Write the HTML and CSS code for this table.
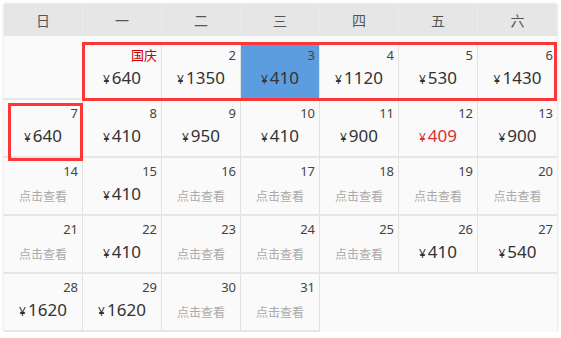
FILE: index.html
```html
<!DOCTYPE html>
<html lang="zh-CN">
<head>
    <meta charset="UTF-8">
    <meta name="viewport" content="width=device-width, initial-scale=1.0">
    <title>低价日历</title>
    <link rel="stylesheet" href="styles.css">
</head>
<body>
    <div class="calendar">
        <div class="calendar-week">
            <div class="week-day">日</div>
            <div class="week-day">一</div>
            <div class="week-day">二</div>
            <div class="week-day">三</div>
            <div class="week-day">四</div>
            <div class="week-day">五</div>
            <div class="week-day">六</div>
        </div>
        <div class="calendar-days">
            <div class="day day-empty"></div>
            <div class="day"><div class="day-num day-holiday">国庆</div><div class="price"><span class="yen">¥</span>640</div></div>
            <div class="day"><div class="day-num">2</div><div class="price"><span class="yen">¥</span>1350</div></div>
            <div class="day day-selected"><div class="day-num">3</div><div class="price"><span class="yen">¥</span>410</div></div>
            <div class="day"><div class="day-num">4</div><div class="price"><span class="yen">¥</span>1120</div></div>
            <div class="day"><div class="day-num">5</div><div class="price"><span class="yen">¥</span>530</div></div>
            <div class="day"><div class="day-num">6</div><div class="price"><span class="yen">¥</span>1430</div></div>

            <div class="day"><div class="day-num">7</div><div class="price"><span class="yen">¥</span>640</div></div>
            <div class="day"><div class="day-num">8</div><div class="price"><span class="yen">¥</span>410</div></div>
            <div class="day"><div class="day-num">9</div><div class="price"><span class="yen">¥</span>950</div></div>
            <div class="day"><div class="day-num">10</div><div class="price"><span class="yen">¥</span>410</div></div>
            <div class="day"><div class="day-num">11</div><div class="price"><span class="yen">¥</span>900</div></div>
            <div class="day"><div class="day-num">12</div><div class="price price-low"><span class="yen">¥</span>409</div></div>
            <div class="day"><div class="day-num">13</div><div class="price"><span class="yen">¥</span>900</div></div>

            <div class="day"><div class="day-num">14</div><div class="check">点击查看</div></div>
            <div class="day"><div class="day-num">15</div><div class="price"><span class="yen">¥</span>410</div></div>
            <div class="day"><div class="day-num">16</div><div class="check">点击查看</div></div>
            <div class="day"><div class="day-num">17</div><div class="check">点击查看</div></div>
            <div class="day"><div class="day-num">18</div><div class="check">点击查看</div></div>
            <div class="day"><div class="day-num">19</div><div class="check">点击查看</div></div>
            <div class="day"><div class="day-num">20</div><div class="check">点击查看</div></div>

            <div class="day"><div class="day-num">21</div><div class="check">点击查看</div></div>
            <div class="day"><div class="day-num">22</div><div class="price"><span class="yen">¥</span>410</div></div>
            <div class="day"><div class="day-num">23</div><div class="check">点击查看</div></div>
            <div class="day"><div class="day-num">24</div><div class="check">点击查看</div></div>
            <div class="day"><div class="day-num">25</div><div class="check">点击查看</div></div>
            <div class="day"><div class="day-num">26</div><div class="price"><span class="yen">¥</span>410</div></div>
            <div class="day"><div class="day-num">27</div><div class="price"><span class="yen">¥</span>540</div></div>

            <div class="day"><div class="day-num">28</div><div class="price"><span class="yen">¥</span>1620</div></div>
            <div class="day"><div class="day-num">29</div><div class="price"><span class="yen">¥</span>1620</div></div>
            <div class="day"><div class="day-num">30</div><div class="check">点击查看</div></div>
            <div class="day"><div class="day-num">31</div><div class="check">点击查看</div></div>
        </div>

        <!-- holiday ranges drawn over the grid -->
        <div class="holiday-mark holiday-mark-week1"></div>
        <div class="holiday-mark holiday-mark-week2"></div>
    </div>
</body>
</html>
```

FILE: styles.css
```css
body {
    margin: 0;
    background-color: #fff;
    font-family: "Noto Sans", "Noto Sans CJK SC", sans-serif;
}

.calendar {
    position: relative;
    width: 553px;
    margin: 4px 0 0 4px;
    background-color: #fafafa;
    box-shadow: 0 0 3px rgba(0, 0, 0, 0.18);
}

.calendar-week {
    display: grid;
    grid-template-columns: repeat(7, 79px);
    height: 32px;
    background-color: #e6e6e6;
    margin-bottom: 6px;
}

.week-day {
    display: flex;
    justify-content: center;
    align-items: center;
    font-size: 14px;
    color: #555;
    border-right: 1px solid #ebebeb;
}

.week-day:last-child {
    border-right: none;
}

.calendar-days {
    display: grid;
    grid-template-columns: repeat(7, 79px);
    grid-auto-rows: 58px;
}

.day {
    box-sizing: border-box;
    padding: 5px 4px 0 0;
    border-right: 1px solid #e3e3e3;
    border-bottom: 2px solid #e6e6e6;
    display: flex;
    flex-direction: column;
}

.day:nth-child(7n) {
    border-right: none;
}

.day-empty {
    border-right: none;
}

.day-selected {
    background-color: #5c9de0;
}

.day-num {
    height: 16px;
    line-height: 16px;
    font-size: 13px;
    color: #444;
    text-align: right;
}

.day-holiday {
    color: #c40000;
}

.price {
    margin-top: 4px;
    padding-left: 4px;
    line-height: 22px;
    font-size: 17px;
    color: #333;
    text-align: center;
}

.price-low {
    color: #d9302f;
}

.yen {
    font-size: 12px;
    margin-right: 2px;
}

.check {
    margin-top: 7px;
    padding-left: 4px;
    line-height: 22px;
    font-size: 12px;
    color: #aaa;
    text-align: center;
}

.holiday-mark {
    position: absolute;
    box-sizing: border-box;
    border: 3px solid #ff3636;
    pointer-events: none;
}

.holiday-mark-week1 {
    left: 78px;
    top: 38px;
    width: 475px;
    height: 59px;
}

.holiday-mark-week2 {
    left: 4px;
    top: 99px;
    width: 75px;
    height: 58px;
}
```
